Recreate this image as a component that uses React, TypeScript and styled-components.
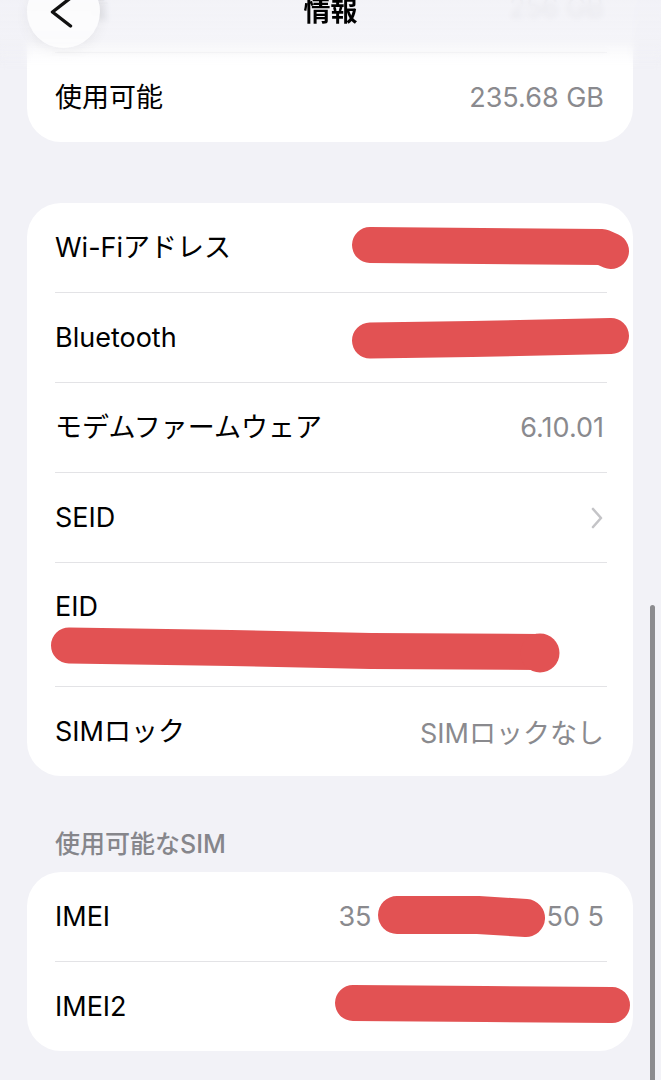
import styled, { createGlobalStyle } from "styled-components"

const GlobalStyle = createGlobalStyle`
  html, body {
    margin:0;
    padding:0;
    background:#f2f2f7;
  }
  body {
    font-family:"Inter", "Noto Sans CJK JP", sans-serif;
    -webkit-font-smoothing:antialiased;
  }
`

const Screen = styled.div`
  position:relative;
  width:661px;
  height:1080px;
  overflow:hidden;
  background:#f2f2f7;
`

const NavBar = styled.header`
  position:absolute;
  top:0;
  left:0;
  right:0;
  height:70px;
  display:grid;
  grid-template-columns:73px 1fr 73px;
  align-items:start;
  padding:0 27px;
  background:linear-gradient(to bottom, rgba(242,242,247,0.93) 0%, rgba(242,242,247,0.8) 55%, rgba(242,242,247,0) 100%);
  backdrop-filter:blur(3px);
  -webkit-mask-image:linear-gradient(to bottom, #000 0%, #000 60%, transparent 100%);
  mask-image:linear-gradient(to bottom, #000 0%, #000 60%, transparent 100%);
  z-index:2;
`

const BackButton = styled.button`
  width:73px;
  height:73px;
  margin-top:-25px;
  padding:0;
  border:none;
  border-radius:50%;
  background:rgba(252,252,253,0.97);
  box-shadow:0 4px 14px rgba(0,0,0,0.06);
  display:flex;
  align-items:center;
  justify-content:center;
`

const BackChevron = styled.svg`
  margin-left:-4px;
`

const Title = styled.h1`
  margin:-3px 0 0;
  font-size:27px;
  font-weight:700;
  line-height:30px;
  text-align:center;
  color:#000;
`

const Content = styled.main`
  display:flex;
  flex-direction:column;
  padding:0 28px 0 27px;
  margin-top:-37px;
`

const Card = styled.section<{ $gap?: number }>`
  background:#fff;
  border-radius:34px;
  overflow:hidden;
  margin-top:${p => p.$gap ?? 0}px;
`

const Row = styled.div`
  height:89px;
  display:flex;
  align-items:center;
  justify-content:space-between;
  padding:0 29px 0 28px;
  font-size:27px;
`

const StackRow = styled.div`
  height:123px;
  box-sizing:border-box;
  display:flex;
  flex-direction:column;
  align-items:flex-start;
  gap:6px;
  padding:30px 28px 0;
  font-size:27px;
`

const Divider = styled.div`
  height:1px;
  background:#e3e3e6;
  margin:0 26px 0 28px;
`

const Label = styled.span`
  color:#000;
  line-height:28px;
  white-space:nowrap;
`

const Value = styled.span`
  display:flex;
  align-items:center;
  color:#8a8a8e;
  white-space:nowrap;
`

const SectionHeader = styled.h2`
  margin:52px 0 12px;
  padding-left:28px;
  font-size:25px;
  font-weight:500;
  line-height:32px;
  color:#86868b;
`

const ScrollIndicator = styled.div`
  position:absolute;
  right:6px;
  top:605px;
  width:5px;
  height:520px;
  border-radius:3px;
  background:rgba(0,0,0,0.42);
`

const Scribble = styled.svg<{ $left?: number; $right?: number }>`
  display:block;
  flex-shrink:0;
  margin-left:${p => p.$left ?? 0}px;
  margin-right:${p => p.$right ?? 0}px;
`

type ScribbleProps = {
  w: number
  h: number
  points: string
  left?: number
  right?: number
  thick?: number
  blob?: [number, number, number]
}

// hand-drawn red marker strokes that hide the identifiers
function Redaction({ w, h, points, left, right, thick = 36, blob }: ScribbleProps) {
  return (
    <Scribble width={w} height={h} viewBox={`0 0 ${w} ${h}`} $left={left} $right={right}>
      <polyline
        points={points}
        fill="none"
        stroke="#e25253"
        strokeWidth={thick}
        strokeLinecap="round"
        strokeLinejoin="round"
      />
      {blob && <circle cx={blob[0]} cy={blob[1]} r={blob[2]} fill="#e25253" />}
    </Scribble>
  )
}

function Disclosure() {
  return (
    <svg width="14" height="24" viewBox="0 0 14 24">
      <path d="M3 3 L11 12 L3 21" fill="none" stroke="#c4c4c7" strokeWidth="2.6" strokeLinecap="round" strokeLinejoin="round" />
    </svg>
  )
}

export default function App() {
  return (
    <Screen>
      <GlobalStyle />
      <NavBar>
        <BackButton aria-label="戻る">
          <BackChevron width="24" height="32" viewBox="0 0 24 32">
            <path d="M20.5 2 L2.5 16 L20.5 30" fill="none" stroke="#111" strokeWidth="3.4" strokeLinecap="round" strokeLinejoin="round" />
          </BackChevron>
        </BackButton>
        <Title>情報</Title>
      </NavBar>

      <Content>
        <Card>
          <Row>
            <Label>容量</Label>
            <Value>256 GB</Value>
          </Row>
          <Divider />
          <Row>
            <Label>使用可能</Label>
            <Value>235.68 GB</Value>
          </Row>
        </Card>

        <Card $gap={61}>
          <Row>
            <Label>Wi-Fiアドレス</Label>
            <Redaction w={278} h={44} right={-26} points="18,19 250,21 259,25" />
          </Row>
          <Divider />
          <Row>
            <Label>Bluetooth</Label>
            <Redaction w={278} h={42} right={-26} points="18,23.5 120,22 259,19" />
          </Row>
          <Divider />
          <Row>
            <Label>モデムファームウェア</Label>
            <Value>6.10.01</Value>
          </Row>
          <Divider />
          <Row>
            <Label>SEID</Label>
            <Disclosure />
          </Row>
          <Divider />
          <StackRow>
            <Label>EID</Label>
            <Redaction w={509} h={46} left={-4} points="18,18.5 180,21 320,24 489,25" blob={[489, 26, 19.5]} />
          </StackRow>
          <Divider />
          <Row>
            <Label>SIMロック</Label>
            <Value>SIMロックなし</Value>
          </Row>
        </Card>

        <SectionHeader>使用可能なSIM</SectionHeader>

        <Card>
          <Row>
            <Label>IMEI</Label>
            <Value>
              35
              <Redaction w={167} h={42} left={6} right={2} thick={38} points="19,19 100,19 148,22" />
              50 5
            </Value>
          </Row>
          <Divider />
          <Row>
            <Label>IMEI2</Label>
            <Redaction w={295} h={44} right={-26} points="18,18 150,19 277,20" />
          </Row>
        </Card>
      </Content>

      <ScrollIndicator />
    </Screen>
  )
}
